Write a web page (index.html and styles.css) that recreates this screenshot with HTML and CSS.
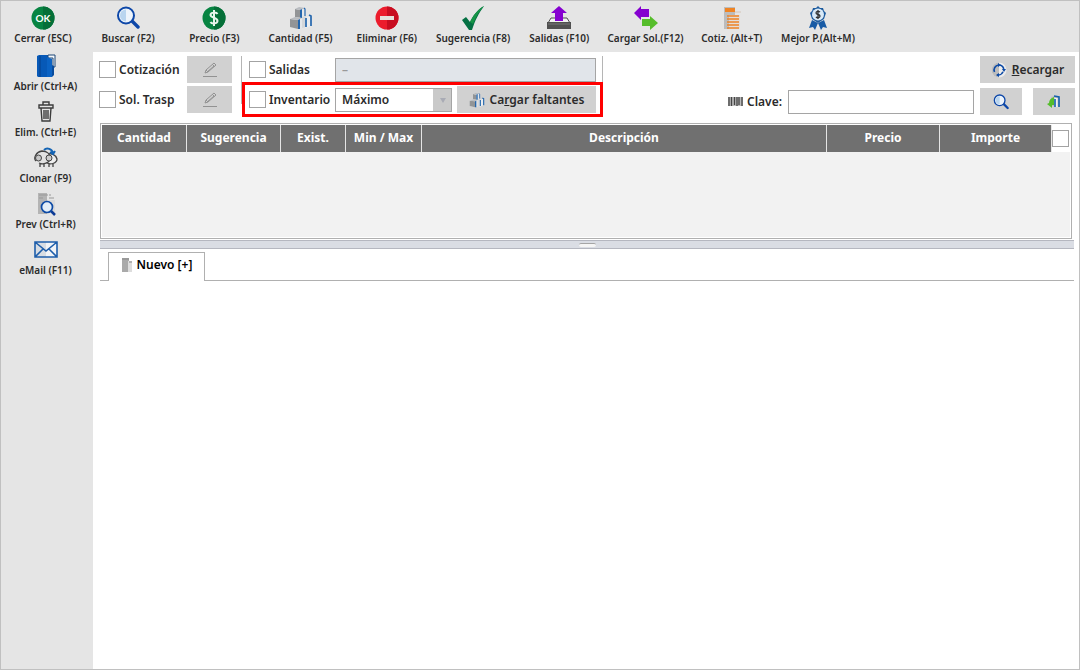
FILE: index.html
```
<!DOCTYPE html>
<html lang="es">
<head>
<meta charset="utf-8">
<title>Cotización</title>
<link rel="stylesheet" href="styles.css">
</head>
<body>
<svg class="defs" aria-hidden="true">
  <symbol id="search" viewBox="0 0 24 24">
    <path d="M15 14l7 7" stroke="#0d47a8" stroke-width="3.4" stroke-linecap="round"/>
    <circle cx="10" cy="9.500" r="8" fill="#edf4fb" stroke="#0d47a8" stroke-width="2"/>
    <path d="M10 3.500a6 6 0 0 0 0 12z" fill="#b9d5ef"/>
  </symbol>
  <symbol id="pencil" viewBox="0 0 16 16">
    <path d="M1 14.500h14M3 11l1-3 8-7 2 2-8 7zM4 8l2 2M10.500 2.500l2 2M5 10l7-6" fill="none" stroke="#929292" stroke-width="1"/>
  </symbol>
  <symbol id="boxes" viewBox="0 0 24 24">
    <path d="M6 3l4-2 6 1v9l-6 1H6z" fill="#e4e7ea"/>
    <path d="M6 3l5 1v8H6z" fill="#929496"/>
    <path d="M6 3l4-2 6 1-5 2z" fill="#b9bcc0"/>
    <path d="M11 4l2-1v9h-2z" fill="#2466ad"/>
    <path d="M15 2l1 1v7" fill="none" stroke="#2466ad" stroke-width="1.2"/>
    <path d="M1 13l5-2 7 1v10l-5 1-7-2z" fill="#e4e7ea"/>
    <path d="M1 13l8 1v9l-8-2z" fill="#929496"/>
    <path d="M1 13l5-2 7 1-4 2z" fill="#b9bcc0"/>
    <path d="M9 14l2-1v10H9z" fill="#2466ad"/>
    <path d="M13 11l4-1v11l-4 1z" fill="#d4d7da"/>
    <path d="M16 12l6-2v10l-6 2z" fill="#eceef0"/>
    <path d="M17 12v9M20 9l2 1v10" fill="none" stroke="#2466ad" stroke-width="1.7"/>
  </symbol>
</svg>
<div class="app">
  <nav class="toolbar" aria-label="Acciones">
    <button class="tool"><svg viewBox="0 0 24 24"><circle cx="12" cy="12" r="11.500" fill="#078442"/><path d="M12 .5a11.500 11.500 0 0 1 0 23z" fill="#056f38"/><text x="12" y="16" text-anchor="middle" class="icon-ok">OK</text></svg><span>Cerrar (ESC)</span></button>
    <button class="tool"><svg><use href="#search"/></svg><span>Buscar (F2)</span></button>
    <button class="tool"><svg viewBox="0 0 24 24"><circle cx="12" cy="12" r="11.500" fill="#078442"/><path d="M12 .5a11.500 11.500 0 0 1 0 23z" fill="#056f38"/><path d="M15.500 8c-1-2-7-2-7 1 0 3 7 2 7 6 0 3-6 3-7 1M12 4v16" fill="none" stroke="#e8f5ec" stroke-width="2"/></svg><span>Precio (F3)</span></button>
    <button class="tool"><svg><use href="#boxes"/></svg><span>Cantidad (F5)</span></button>
    <button class="tool"><svg viewBox="0 0 24 24"><circle cx="12" cy="12" r="11.500" fill="#ec1c2c"/><path d="M12 .5a11.500 11.500 0 0 1 0 23z" fill="#c80d20"/><path d="M5 10h14v4H5z" fill="#e6e1dc"/></svg><span>Eliminar (F6)</span></button>
    <button class="tool"><svg viewBox="0 0 24 24"><path d="M1 14l4-3 4 5C12 10 16 4 23 0 18 7 14 14 11 24H8z" fill="#047043"/><path d="M9 16C12 10 16 4 23 0c-4 4-8 10-11 18z" fill="#159447"/></svg><span>Sugerencia (F8)</span></button>
    <button class="tool"><svg viewBox="0 0 24 24"><path d="M4 12h16l3 5H1z" fill="#f1f1f1" stroke="#4d4d4d"/><path d="M0 16h24v7H0z" fill="#505050"/><path d="M1 18h22" stroke="#777"/><path d="M12 0l8 7h-4v8H8V7H4z" fill="#8500d0"/></svg><span>Salidas (F10)</span></button>
    <button class="tool"><svg viewBox="0 0 24 24"><path d="M0 7l7-7v3h8v8H7v3z" fill="#8500d0"/><path d="M8 13h8v-3l8 7-8 7v-4H8z" fill="#56bd2b"/></svg><span>Cargar Sol.(F12)</span></button>
    <button class="tool"><svg viewBox="0 0 24 24"><path d="M4 1h11v22H4z" fill="#bcbcbc"/><path d="M9 9h11v14H9z" fill="#e4ddd7"/><path d="M5 2h10v4H5z" fill="#ef8424"/><path d="M7 10h12M7 13h12M7 16h12M7 19h12M7 22h12" stroke="#ed8226" stroke-width="1.700"/><path d="M15 6h6" stroke="#d4c5b8"/></svg><span>Cotiz. (Alt+T)</span></button>
    <button class="tool"><svg viewBox="0 0 24 24"><path d="M6 14l-3 8 4-1 2 3 3-7zM18 14l3 8-4-1-2 3-3-7z" fill="#185ba5"/><path d="M12 0l2 2h3l1 3 2 2-1 3-1 3-3 2-3 2-3-2-3-2-1-3-1-3 2-2 1-3h3z" fill="#1d5b9e"/><circle cx="12" cy="8.500" r="6" fill="#d8e9f7"/><path d="M14 6c-1-1-4-1-4 1s4 1 4 3-3 2-4 1M12 4v9" fill="none" stroke="#333" stroke-width="1.300"/></svg><span>Mejor P.(Alt+M)</span></button>
  </nav>
  <nav class="sidebar" aria-label="Documento">
    <button class="tool"><svg viewBox="0 0 24 24"><path d="M3 2l2-1h9v22H4l-1-1z" fill="#0759b7"/><path d="M6 2v21" stroke="#07408a"/><path d="M14 1h7v12h-2V4h-5z" fill="#f4f7fa" stroke="#1d4777"/><path d="M13 3l5 2v18h-5z" fill="#0b63c4"/><path d="M18 11l2 1v9l-2 2z" fill="#084b9c"/></svg><span>Abrir (Ctrl+A)</span></button>
    <button class="tool"><svg viewBox="0 0 24 24"><path d="M9 5V2h6v3M5 5h14v3H5zM7 8l1 13h8l1-13M10 10v9M12 10v9M14 10v9" fill="none" stroke="#3c3c3c" stroke-width="1.400"/></svg><span>Elim. (Ctrl+E)</span></button>
    <button class="tool"><svg viewBox="0 0 24 24"><path d="M13 9c4-3 9 0 10 4 0 4-7 7-11 3M15 17v4M19 17v4" fill="#eee" stroke="#444" stroke-width="1.300"/><path d="M2 15c-3-3 0-9 6-10 5 0 8 3 8 7 0 5-7 7-11 5M6 17v4M10 17v4" fill="#e2e2e2" stroke="#444" stroke-width="1.300"/><circle cx="4.500" cy="12" r="3" fill="#c8c8c8" stroke="#444"/><circle cx="15" cy="12" r="3" fill="#ccc" stroke="#444"/><path d="M10 4c3-3 8-1 9 3M21 5l-2 3-3-2" fill="none" stroke="#1464b4" stroke-width="2"/></svg><span>Clonar (F9)</span></button>
    <button class="tool"><svg viewBox="0 0 24 24"><path d="M4 1h9v21H4z" fill="#b4b4b4"/><path d="M5 3h9M5 6h4M15 6h5M15 3h2" stroke="#999"/><path d="M13 8h8v13h-8z" fill="#dadada"/><path d="M17 19l4 4" stroke="#0d3b96" stroke-width="2.500"/><circle cx="13" cy="15" r="5.500" fill="#e4eef7" stroke="#0d4aa5" stroke-width="1.700"/></svg><span>Prev (Ctrl+R)</span></button>
    <button class="tool"><svg viewBox="0 0 24 24"><path d="M1 4h22v15H1z" fill="#f2f4f7"/><path d="M1 4h11v15H1z" fill="#d8dde3"/><path d="M1 4h22v15H1zM1 4l11 9L23 4M1 19l8-8M23 19l-8-8" fill="none" stroke="#1e5eab" stroke-width="1.600"/></svg><span>eMail (F11)</span></button>
  </nav>
  <main class="main">
    <form class="filters">
      <div class="sources">
        <label class="check"><input type="checkbox">Cotización</label>
        <button type="button" class="btn" disabled aria-label="Editar cotización"><svg class="small"><use href="#pencil"/></svg></button>
        <label class="check"><input type="checkbox">Sol. Trasp</label>
        <button type="button" class="btn" disabled aria-label="Editar traspaso"><svg class="small"><use href="#pencil"/></svg></button>
      </div>
      <div class="stock">
        <label class="check"><input type="checkbox">Salidas</label>
        <input class="field muted" type="text" value="–" disabled aria-label="Salida">
        <label class="check"><input type="checkbox">Inventario</label>
        <div class="inventory">
          <span class="combo"><select aria-label="Nivel de inventario"><option>Máximo</option></select></span>
          <button type="button" class="btn"><svg class="small"><use href="#boxes"/></svg><span>Ca<u>r</u>gar faltantes</span></button>
        </div>
      </div>
      <div class="lookup">
        <button type="button" class="btn reload"><svg class="small" viewBox="0 0 16 16"><circle cx="8" cy="8" r="7.500" fill="#ececec"/><path d="M8 .5a7.500 7.500 0 0 0 0 15z" fill="#bdbdbd"/><path d="M3.500 10a5 5 0 0 1 4-7M6 12.700a5 5 0 0 0 6-3M12.700 8a5 5 0 0 0-4-5" fill="none" stroke="#0d4aa5" stroke-width="1.600"/><path d="M7 1l3 2-3 2zM8 11v4l-3-2zM11 7h4l-2 3z" fill="#0d4aa5"/></svg><span><u>R</u>ecargar</span></button>
        <div class="key">
          <label for="clave"><svg class="barcode" viewBox="0 0 15 9"><path d="M0 0h15v9H0z" fill="#bbb"/><path d="M1 0v9M3.500 0v9M6.500 0v8M9 0v9M11 0v8M14 0v9" stroke="#444" stroke-width="1.300"/></svg>Clave:</label>
          <input class="field" id="clave" type="text">
          <button type="button" class="btn" aria-label="Buscar clave"><svg class="small"><use href="#search"/></svg></button>
          <button type="button" class="btn last" aria-label="Agregar"><svg class="small" viewBox="0 0 16 16"><path d="M5 3l3-1h5l1 2v8H5z" fill="#c1c1c1"/><path d="M10 4v9" stroke="#f0f0f0" stroke-width="3"/><path d="M8 2l5 1v10M9 5v8" fill="none" stroke="#1460ad" stroke-width="1.600"/><path d="M8 3v8H6v3L1 10l2-1c0-3 2-5 5-6z" fill="#55bd2b"/></svg></button>
        </div>
      </div>
    </form>
    <section class="grid">
      <table>
        <colgroup><col class="c-qty"><col class="c-sug"><col class="c-stock"><col class="c-range"><col><col class="c-price"><col class="c-amount"></colgroup>
        <thead><tr><th>Cantidad</th><th>Sugerencia</th><th>Exist.</th><th>Min / Max</th><th>Descripción</th><th>Precio</th><th>Importe</th></tr></thead>
      </table>
      <div class="corner"><input type="checkbox" aria-label="Seleccionar todo"></div>
    </section>
    <div class="splitter"><span></span></div>
    <div class="tabs">
      <button class="tab"><svg viewBox="0 0 12 16"><path d="M1 1h7v14H1z" fill="#aaa"/><path d="M7 4h4v11H7z" fill="#ddd"/><path d="M1 2h7M8 5h3" stroke="#888"/></svg>Nuevo [+]</button>
    </div>
  </main>
</div>
</body>
</html>
```
FILE: styles.css
```
* { box-sizing: border-box; }
body {
  margin: 0;
  background: #fff;
  color: #2b2b2b;
  font: 600 12px/16px "Noto Sans", "Open Sans", sans-serif;
}
button, input, select { font: inherit; color: inherit; margin: 0; }
svg { display: block; fill: none; flex: none; }
.defs { position: absolute; width: 0; height: 0; }
.app {
  display: grid;
  grid-template: 51px 1fr / 92px minmax(0, 1fr);
  min-height: 100vh;
  border: 1px solid #c0c0c0;
}
.toolbar, .sidebar { background: #e5e5e5; }
.toolbar { grid-column: 1 / -1; display: flex; }
.tool {
  display: flex;
  flex-direction: column;
  align-items: center;
  padding: 0;
  border: 0;
  background: none;
  font-size: 10px;
  line-height: 16px;
  white-space: nowrap;
}
.tool svg { width: 24px; height: 24px; }
.toolbar .tool { width: 8%; padding-top: 5px; }
.toolbar .tool:first-child { width: 84px; }
.sidebar { display: flex; flex-direction: column; padding-right: 3px; }
.sidebar .tool { height: 46px; padding-top: 2px; }
.icon-ok { font: 700 10px Lato, sans-serif; fill: #fff; }

.main { padding: 4px 4px 0 6px; }
.filters { display: flex; height: 67px; }
.sources, .stock {
  display: grid;
  grid-auto-rows: 27px;
  gap: 3px 0;
  align-items: center;
  align-content: start;
}
.sources { grid-template-columns: 88px 45px; }
.stock {
  position: relative;
  grid-template-columns: 86px 261px;
  margin-left: 9px;
  padding: 0 7px 0 8px;
  background: linear-gradient(#b5b5b5, #b5b5b5) 0 0 / 1px 48px no-repeat,
    linear-gradient(#b5b5b5, #b5b5b5) 100% 0 / 1px 48px no-repeat;
}
.stock::after {
  content: "";
  position: absolute;
  inset: 26px 0 6px 1px;
  border: 3px solid #f00;
  pointer-events: none;
}
.check { display: flex; align-items: center; gap: 3px; white-space: nowrap; }
input[type="checkbox"] {
  appearance: none;
  flex: none;
  width: 17px;
  height: 17px;
  border: 1px solid #a3a3a3;
  background: #fff;
}
.btn {
  display: flex;
  align-items: center;
  justify-content: center;
  gap: 5px;
  height: 27px;
  padding: 0;
  border: 0;
  background: #d1d1d1;
  white-space: nowrap;
}
.small { width: 16px; height: 16px; }
.field {
  width: 100%;
  height: 24px;
  padding: 0 6px;
  border: 1px solid #a5a5a5;
  background: #fff;
}
.muted { background: #e1e5ea; color: #999; }
.inventory { display: grid; grid-template-columns: 117px 1fr; gap: 5px; align-items: center; }
.combo { position: relative; }
.combo select {
  display: block;
  appearance: none;
  width: 100%;
  height: 24px;
  padding: 0 6px;
  border: 1px solid #a5a5a5;
  border-radius: 0;
  background: linear-gradient(#c9c9c9, #c9c9c9) 100% 0 / 18px 100% no-repeat #fff;
}
.combo::after {
  content: "";
  position: absolute;
  right: 6px;
  top: 10px;
  border: solid transparent;
  border-width: 5px 3px 0;
  border-top-color: #a9abb5;
  pointer-events: none;
}
.lookup { margin-left: auto; display: flex; flex-direction: column; gap: 5px; }
.reload { align-self: flex-end; width: 95px; }
.key { display: flex; align-items: center; }
.key label { display: flex; align-items: center; gap: 4px; margin-right: 6px; }
.key .field { width: 186px; margin-right: 6px; }
.key .btn { width: 42px; }
.key .last { margin-left: 11px; }
.barcode { width: 15px; height: 9px; }

.grid {
  display: flex;
  align-items: flex-start;
  height: 116px;
  margin: 0 3px 0 1px;
  border: 1px solid #b0b0b0;
  outline: 1px solid #fff;
  outline-offset: -2px;
  background: #f2f2f2;
}
.grid table { flex: 1; table-layout: fixed; border-collapse: collapse; background: #707070; }
.grid th {
  height: 28px;
  padding: 0;
  border-right: 1px solid #e5e5e5;
  color: #fff;
  font-weight: 700;
}
.grid th:first-child { border-left: 1px solid #fff; }
.c-qty { width: 85px; }
.c-sug { width: 94px; }
.c-stock { width: 65px; }
.c-range { width: 76px; }
.c-price { width: 113px; }
.c-amount { width: 112px; }
.corner { display: flex; align-items: center; width: 19px; height: 28px; background: #fff; }
.splitter {
  display: flex;
  align-items: center;
  justify-content: center;
  height: 9px;
  margin: 1px 1px 3px;
  border: solid #b5b7c0;
  border-width: 1px 0;
  background: #dadde4;
}
.splitter span { width: 17px; height: 4px; border-top: 1px solid #a5a5a5; border-radius: 2px; background: #f5f5f5; }
.tabs { display: flex; height: 29px; margin: 0 1px; padding-left: 8px; box-shadow: inset 0 -1px #b0b0b0; }
.tab {
  display: flex;
  align-items: center;
  justify-content: center;
  gap: 4px;
  width: 97px;
  padding: 0 0 4px;
  border: 1px solid #b0b0b0;
  border-bottom: 0;
  background: #fff;
  color: #000;
}
.tab svg { width: 12px; height: 16px; }
```
